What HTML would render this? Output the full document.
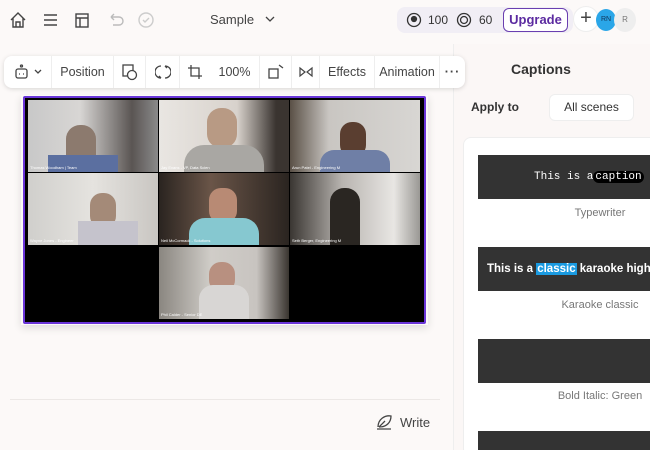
<!DOCTYPE html><html><head><style>
*{box-sizing:border-box;margin:0;padding:0}
html,body{width:650px;height:450px;overflow:hidden}
body{background:#fcf9f8;font-family:"Liberation Sans",sans-serif;color:#333;position:relative}
.a{position:absolute}
.tb{left:4px;top:56px;width:461px;height:32px;background:#fff;border-radius:8px;box-shadow:0 1px 5px rgba(0,0,0,.15);display:flex;align-items:center;font-size:12.5px;color:#444}
.tb div{height:32px;display:flex;align-items:center;justify-content:center;border-right:1px solid #eee}
.tile{position:absolute;width:130px;height:72px;overflow:hidden}
.nm{position:absolute;left:2px;bottom:2px;font-size:4px;color:#fff}
.card{position:absolute;left:478px;width:180px;height:44px;background:#333;color:#fff;font-size:12px;display:flex;align-items:center}
.lab{position:absolute;left:525px;width:150px;text-align:center;font-size:11px;color:#777}
</style></head><body>
<svg class="a" style="left:8px;top:10px" width="150" height="20" fill="none" stroke="#444" stroke-width="1.4">
<path d="M3 10 L10 3 L17 10 M5 8 V17 H15 V8 M8 17 V12 H12 V17"/>
<path d="M36 5H49M36 10H49M36 15H49"/>
<rect x="68" y="4" width="12" height="13"/><path d="M68 8H80M72 8V17"/>
<path stroke="#bbb" d="M103 7 H111 a4 4 0 0 1 0 8 H105 M103 7 l3 -3 M103 7 l3 3"/>
<circle stroke="#ccc" cx="138" cy="10" r="7"/><path stroke="#ccc" d="M135 10l2 2 4-4"/>
</svg>
<div class="a" style="left:210px;top:12px;font-size:13px;color:#444">Sample</div>
<svg class="a" style="left:265px;top:15px" width="10" height="8"><path d="M1 2l4 4 4-4" fill="none" stroke="#444" stroke-width="1.3"/></svg>
<div class="a" style="left:397px;top:7px;width:176px;height:26px;background:#f1eef5;border-radius:8px"></div>
<svg class="a" style="left:406px;top:12px" width="80" height="16" fill="none" stroke="#333" stroke-width="1.3"><circle cx="8" cy="8" r="6.5"/><circle cx="8" cy="7" r="2.5" fill="#333"/><circle cx="58" cy="8" r="6.5"/><circle cx="58" cy="8" r="3.5"/></svg>
<div class="a" style="left:428px;top:13px;font-size:12px">100</div>
<div class="a" style="left:479px;top:13px;font-size:12px">60</div>
<div class="a" style="left:503px;top:8px;width:65px;height:24px;border:1.5px solid #6a3fb0;border-radius:6px;background:#fff;color:#5b2aa0;font-weight:bold;font-size:13px;text-align:center;line-height:21px">Upgrade</div>
<div class="a" style="left:573px;top:6px;width:26px;height:26px;border-radius:50%;background:#fff;border:1px solid #eee;font-size:20px;line-height:22px;text-align:center;color:#444">+</div>
<div class="a" style="left:596px;top:9px;width:20px;height:22px;border-radius:50%;background:#2aa6e8;font-size:7px;color:#135;line-height:22px;text-align:center">RN</div>
<div class="a" style="left:614px;top:8px;width:22px;height:24px;border-radius:50%;background:#eee;font-size:8px;color:#777;line-height:24px;text-align:center">R</div>
<div class="a" style="left:453px;top:44px;width:197px;height:406px;background:#fbf7f6;border-left:1px solid #eee"></div>
<div class="a" style="left:511px;top:61px;font-size:14px;font-weight:bold;color:#333">Captions</div>
<div class="a" style="left:471px;top:100px;font-size:12px;font-weight:bold;color:#333">Apply to</div>
<div class="a" style="left:549px;top:94px;width:85px;height:27px;background:#fff;border-radius:6px;border:1px solid #eee;font-size:12px;text-align:center;line-height:25px;color:#333">All scenes</div>
<div class="a" style="left:463px;top:137px;width:200px;height:320px;background:#fff;border:1px solid #eee;border-radius:8px"></div>
<div class="card" style="top:155px;padding-left:56px;font-family:'Liberation Mono',monospace;font-size:11px;white-space:nowrap">This is a <span style="background:#000;border-radius:6px;padding:0 2px">caption</span></div>
<div class="lab" style="top:207px">Typewriter</div>
<div class="card" style="top:247px;padding-left:9px;font-weight:bold;white-space:nowrap;overflow:hidden;font-size:11.5px">This is a&nbsp;<span style="background:#1a9ae0;padding:0 1px">classic</span>&nbsp;karaoke highlig</div>
<div class="lab" style="top:299px">Karaoke classic</div>
<div class="card" style="top:339px"></div>
<div class="lab" style="top:390px">Bold Italic: Green</div>
<div class="card" style="top:431px;height:19px"></div>
<div class="tb a">
<div style="width:48px"><svg width="30" height="16" fill="none" stroke="#444" stroke-width="1.3"><rect x="3" y="5" width="11" height="9" rx="2"/><circle cx="8.5" cy="2" r="1"/><path d="M6 10h1M10 10h1M22 6l3 3 3-3"/></svg></div>
<div style="width:62px">Position</div>
<div style="width:32px"><svg width="18" height="18" fill="none" stroke="#444" stroke-width="1.3"><rect x="2" y="2" width="10" height="11"/><circle cx="11" cy="12" r="4.5" fill="#fff"/></svg></div>
<div style="width:34px"><svg width="16" height="16" fill="none" stroke="#444" stroke-width="1.3"><path d="M6 2a6 6 0 0 0 0 12M10 2a6 6 0 0 1 0 12M6 14l-2 -2M10 2l2 2"/></svg></div>
<div style="width:30px;border:none"><svg width="16" height="16" fill="none" stroke="#444" stroke-width="1.3"><path d="M4 1v11h11M1 4h11v11"/></svg></div>
<div style="width:50px">100%</div>
<div style="width:32px"><svg width="18" height="18" fill="none" stroke="#444" stroke-width="1.3"><rect x="2" y="6" width="9" height="9"/><path d="M12 2l4 3"/></svg></div>
<div style="width:28px"><svg width="16" height="12" fill="none" stroke="#444" stroke-width="1.2"><path d="M2 2l5 4-5 4zM14 2l-5 4 5 4z"/></svg></div>
<div style="width:55px">Effects</div>
<div style="width:65px">Animation</div>
<div style="width:25px;border:none;font-weight:bold;letter-spacing:1px">···</div>
</div>
<div class="a" style="left:21px;top:95px;width:407px;height:230px;box-shadow:0 3px 8px rgba(0,0,0,.12)"></div>
<div class="a" style="left:23px;top:96px;width:403px;height:228px;background:#000;border:2px solid #6a35d8;border-radius:2px"></div>
<div class="tile" style="left:28px;top:100px;background:linear-gradient(90deg,#c8c8c8 0%,#d8d6d4 40%,#5a5553 80%,#8a8a8a);"><div style="position:absolute;left:38px;top:25px;width:30px;height:45px;background:#8c7a6e;border-radius:14px 14px 0 0"></div><div style="position:absolute;left:20px;top:55px;width:70px;height:17px;background:#5b6fa0"></div><span class="nm">Thomas Woodham | Team</span></div>
<div class="tile" style="left:159px;top:100px;background:linear-gradient(90deg,#e9e6e2,#d8d2cc 60%,#3a3430 90%)"><div style="position:absolute;left:48px;top:8px;width:30px;height:40px;background:#b89a84;border-radius:14px"></div><div style="position:absolute;left:25px;top:45px;width:80px;height:27px;background:#a9a7a3;border-radius:20px 20px 0 0"></div><span class="nm">Jay Evans - VP, Data Scien</span></div>
<div class="tile" style="left:290px;top:100px;background:linear-gradient(90deg,#5a5046,#c9c6c2 30%,#d8d6d3)"><div style="position:absolute;left:50px;top:22px;width:26px;height:35px;background:#5a3e30;border-radius:12px"></div><div style="position:absolute;left:30px;top:50px;width:70px;height:22px;background:#6f7fa6;border-radius:14px 14px 0 0"></div><span class="nm">Arun Patel - Engineering M</span></div>
<div class="tile" style="left:28px;top:173px;background:linear-gradient(90deg,#d0cfcc,#e5e3df 50%,#c9c6c2)"><div style="position:absolute;left:62px;top:20px;width:26px;height:35px;background:#a48a78;border-radius:12px"></div><div style="position:absolute;left:50px;top:48px;width:60px;height:24px;background:#c5c3cc"></div><span class="nm">Wayne Jones - Engineer</span></div>
<div class="tile" style="left:159px;top:173px;background:linear-gradient(90deg,#2a2420,#6a5548 40%,#2a2420)"><div style="position:absolute;left:50px;top:15px;width:28px;height:35px;background:#b88a74;border-radius:12px"></div><div style="position:absolute;left:30px;top:45px;width:70px;height:27px;background:#86c8d0;border-radius:16px 16px 0 0"></div><span class="nm">Neil McCormack - Solutions</span></div>
<div class="tile" style="left:290px;top:173px;background:linear-gradient(90deg,#3a3632,#b8b4b0 40%,#e8e6e3 80%,#9a9894)"><div style="position:absolute;left:40px;top:15px;width:30px;height:57px;background:#2a2622;border-radius:14px 14px 0 0"></div><span class="nm">Seth Berger, Engineering M</span></div>
<div class="tile" style="left:159px;top:247px;background:linear-gradient(90deg,#8a8680,#d0cdc8 40%,#c8c4c0 75%,#3a3530)"><div style="position:absolute;left:50px;top:15px;width:26px;height:30px;background:#b89080;border-radius:12px"></div><div style="position:absolute;left:40px;top:38px;width:50px;height:34px;background:#d8d6d4;border-radius:14px 14px 0 0"></div><span class="nm">Phil Calder - Senior DE</span></div>
<div class="a" style="left:10px;top:399px;width:430px;height:1px;background:#ece8e6"></div>
<svg class="a" style="left:375px;top:413px" width="20" height="18" fill="none" stroke="#444" stroke-width="1.3"><path d="M3 14 C3 6 10 2 16 3 C16 9 12 14 4 14 M4 14 L10 8 M2 16 H16"/></svg>
<div class="a" style="left:400px;top:415px;font-size:13px;color:#444">Write</div>
</body></html>
